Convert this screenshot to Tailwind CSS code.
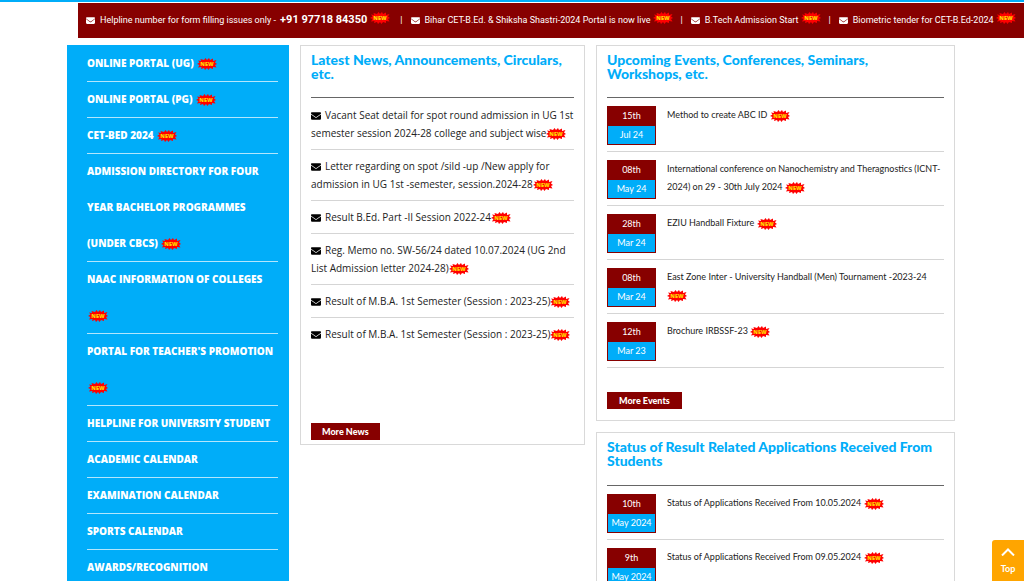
<!DOCTYPE html>
<html lang="en">
<head>
<meta charset="utf-8">
<meta name="viewport" content="width=device-width, initial-scale=1">
<title>University Portal</title>
<script src="https://cdn.jsdelivr.net/npm/@tailwindcss/browser@4"></script>
</head>
<body class="h-screen overflow-hidden bg-white font-['Lato','Open_Sans',sans-serif] text-[#222]">
<svg class="hidden" aria-hidden="true">
  <symbol id="new" viewBox="0 0 40 24">
    <path fill="#ff0000" d="M0 12 5 9 2 5 8 6 7 2 14 4 17 0 20 4 24 0 26 4 32 1 32 6 39 4 36 9 40 12 36 14 39 19 32 18 32 22 26 20 23 24 20 20 16 24 14 20 8 22 9 18 2 19 5 14Z"/>
    <text x="20" y="16" text-anchor="middle" font-family="Open Sans, sans-serif" font-weight="800" font-size="11" fill="#ffd800">NEW</text>
  </symbol>
  <symbol id="mail" viewBox="0 0 512 384">
    <path fill="currentColor" d="M48 0h416c27 0 48 21 48 48 0 15-7 29-19 38L275 249c-11 9-27 9-38 0L19 86C7 77 0 63 0 48 0 21 21 0 48 0ZM0 112l218 163c22 17 54 17 76 0l218-163v208c0 35-29 64-64 64H64c-35 0-64-29-64-64Z"/>
  </symbol>
</svg>

<header class="border-t-2 border-[#00adf9] pt-px">
  <div class="ml-[78px] flex h-[35px] items-center overflow-hidden bg-[#870000] pl-2 font-['Roboto','Open_Sans',sans-serif] text-[9px] whitespace-nowrap text-white">
    <a href="#" class="flex items-center"><svg class="mr-[5px] h-[7px] w-[9px]"><use href="#mail"/></svg>Helpline number for form filling issues only -&nbsp;<b class="ml-[2px] text-[11px]">+91 97718 84350</b><svg class="mb-[6px] ml-[3px] h-3 w-5" role="img" aria-label="New"><use href="#new"/></svg></a>
    <span class="mr-2 ml-[10px]">|</span>
    <a href="#" class="flex items-center"><svg class="mr-[5px] h-[7px] w-[9px]"><use href="#mail"/></svg>Bihar CET-B.Ed. &amp; Shiksha Shastri-2024 Portal is now live<svg class="mb-[6px] ml-[2px] h-3 w-5" role="img" aria-label="New"><use href="#new"/></svg></a>
    <span class="mx-2">|</span>
    <a href="#" class="flex items-center"><svg class="mr-[5px] h-[7px] w-[9px]"><use href="#mail"/></svg>B.Tech Admission Start<svg class="mb-[6px] ml-[2px] h-3 w-5" role="img" aria-label="New"><use href="#new"/></svg></a>
    <span class="mx-2">|</span>
    <a href="#" class="flex items-center"><svg class="mr-[5px] h-[7px] w-[9px]"><use href="#mail"/></svg>Biometric tender for CET-B.Ed-2024<svg class="mb-[6px] ml-[2px] h-3 w-5" role="img" aria-label="New"><use href="#new"/></svg></a>
  </div>
</header>

<main class="mt-[7px] grid grid-cols-[222fr_285fr_359fr] items-start gap-[11px] pr-[69px] pl-[67px]">
  <nav class="bg-[#00adf9] pr-[11px] pb-5 pl-5 font-['Open_Sans','Noto_Sans',sans-serif] text-[10px] leading-[36px] font-extrabold text-white uppercase" aria-label="Quick links">
    <ul>
      <li class="shadow-[0_1px_0_#b3e6fd]"><a href="#">Online Portal (UG) <svg class="ml-px inline h-3 w-5" role="img" aria-label="New"><use href="#new"/></svg></a></li>
      <li class="shadow-[0_1px_0_#b3e6fd]"><a href="#">Online Portal (PG) <svg class="ml-px inline h-3 w-5" role="img" aria-label="New"><use href="#new"/></svg></a></li>
      <li class="shadow-[0_1px_0_#b3e6fd]"><a href="#">CET-BED 2024 <svg class="ml-px inline h-3 w-5" role="img" aria-label="New"><use href="#new"/></svg></a></li>
      <li class="shadow-[0_1px_0_#b3e6fd]"><a href="#">Admission Directory for Four Year Bachelor Programmes<br>(Under CBCS) <svg class="ml-px inline h-3 w-5" role="img" aria-label="New"><use href="#new"/></svg></a></li>
      <li class="shadow-[0_1px_0_#b3e6fd]"><a href="#">NAAC Information of Colleges <svg class="ml-px inline h-3 w-5" role="img" aria-label="New"><use href="#new"/></svg></a></li>
      <li class="shadow-[0_1px_0_#b3e6fd]"><a href="#"><span class="whitespace-nowrap">Portal for Teacher's Promotion</span> <svg class="ml-px inline h-3 w-5" role="img" aria-label="New"><use href="#new"/></svg></a></li>
      <li class="shadow-[0_1px_0_#b3e6fd]"><a href="#" class="whitespace-nowrap">Helpline for University Student</a></li>
      <li class="shadow-[0_1px_0_#b3e6fd]"><a href="#">Academic Calendar</a></li>
      <li class="shadow-[0_1px_0_#b3e6fd]"><a href="#">Examination Calendar</a></li>
      <li class="shadow-[0_1px_0_#b3e6fd]"><a href="#">Sports Calendar</a></li>
      <li class="shadow-[0_1px_0_#b3e6fd]"><a href="#">Awards/Recognition</a></li>
    </ul>
  </nav>

  <section class="border border-[#d9d9d9] px-[10px] pt-[7px] pb-1">
    <h2 class="border-b border-[#666] pb-4 text-[14px] leading-[14px] font-black text-[#00adf9]">Latest News, Announcements, Circulars, etc.</h2>
    <ul class="pt-px font-['Open_Sans','Noto_Sans',sans-serif] text-[10px] leading-[18px]">
      <li class="border-b border-[#d5d5d5] py-[7px]"><a href="#"><svg class="mr-1 inline h-2 w-[10px] text-black"><use href="#mail"/></svg>Vacant Seat detail for spot round admission in UG 1st semester session 2024-28 college and subject wise<svg class="inline h-3 w-5" role="img" aria-label="New"><use href="#new"/></svg></a></li>
      <li class="border-b border-[#d5d5d5] py-[7px]"><a href="#"><svg class="mr-1 inline h-2 w-[10px] text-black"><use href="#mail"/></svg>Letter regarding on spot /sild -up /New apply for<br>admission in UG 1st -semester, session.2024-28<svg class="inline h-3 w-5" role="img" aria-label="New"><use href="#new"/></svg></a></li>
      <li class="border-b border-[#d5d5d5] py-[7px]"><a href="#"><svg class="mr-1 inline h-2 w-[10px] text-black"><use href="#mail"/></svg>Result B.Ed. Part -II Session 2022-24<svg class="inline h-3 w-5" role="img" aria-label="New"><use href="#new"/></svg></a></li>
      <li class="border-b border-[#d5d5d5] py-[7px]"><a href="#"><svg class="mr-1 inline h-2 w-[10px] text-black"><use href="#mail"/></svg>Reg. Memo no. SW-56/24 dated 10.07.2024 (UG 2nd<br>List Admission letter 2024-28)<svg class="inline h-3 w-5" role="img" aria-label="New"><use href="#new"/></svg></a></li>
      <li class="border-b border-[#d5d5d5] py-[7px]"><a href="#"><svg class="mr-1 inline h-2 w-[10px] text-black"><use href="#mail"/></svg>Result of M.B.A. 1st Semester (Session : 2023-25)<svg class="inline h-3 w-5" role="img" aria-label="New"><use href="#new"/></svg></a></li>
      <li class="py-[7px]"><a href="#"><svg class="mr-1 inline h-2 w-[10px] text-black"><use href="#mail"/></svg>Result of M.B.A. 1st Semester (Session : 2023-25)<svg class="inline h-3 w-5" role="img" aria-label="New"><use href="#new"/></svg></a></li>
    </ul>
    <button type="button" class="mt-[73px] block h-[17px] bg-[#870000] px-[11px] text-[9px] leading-[17px] font-black text-white">More News</button>
  </section>

  <div class="flex flex-col gap-[11px]">
    <section class="border border-[#d9d9d9] px-[10px] pt-[7px] pb-[11px]">
      <h2 class="border-b border-[#666] pb-4 text-[14px] leading-[14px] font-black text-[#00adf9]">Upcoming Events, Conferences, Seminars, Workshops, etc.</h2>
      <ul class="text-[9px] leading-[18px]">
        <li class="flex gap-[11px] border-b border-[#d5d5d5] pt-2 pb-[6px]"><time class="block h-[39px] w-[49px] shrink-0 border border-[#870000] bg-[#00adf9] text-center text-white"><span class="block h-[19px] bg-[#870000]">15th</span><span class="block">Jul 24</span></time><a href="#">Method to create ABC ID <svg class="inline h-3 w-5" role="img" aria-label="New"><use href="#new"/></svg></a></li>
        <li class="flex gap-[11px] border-b border-[#d5d5d5] pt-2 pb-[6px]"><time class="block h-[39px] w-[49px] shrink-0 border border-[#870000] bg-[#00adf9] text-center text-white"><span class="block h-[19px] bg-[#870000]">08th</span><span class="block">May 24</span></time><a href="#">International conference on Nanochemistry and Theragnostics (ICNT-2024) on 29 - 30th July 2024 <svg class="inline h-3 w-5" role="img" aria-label="New"><use href="#new"/></svg></a></li>
        <li class="flex gap-[11px] border-b border-[#d5d5d5] pt-2 pb-[6px]"><time class="block h-[39px] w-[49px] shrink-0 border border-[#870000] bg-[#00adf9] text-center text-white"><span class="block h-[19px] bg-[#870000]">28th</span><span class="block">Mar 24</span></time><a href="#">EZIU Handball Fixture <svg class="inline h-3 w-5" role="img" aria-label="New"><use href="#new"/></svg></a></li>
        <li class="flex gap-[11px] border-b border-[#d5d5d5] pt-2 pb-[6px]"><time class="block h-[39px] w-[49px] shrink-0 border border-[#870000] bg-[#00adf9] text-center text-white"><span class="block h-[19px] bg-[#870000]">08th</span><span class="block">Mar 24</span></time><a href="#">East Zone Inter - University Handball (Men) Tournament -2023-24<br><svg class="inline h-3 w-5" role="img" aria-label="New"><use href="#new"/></svg></a></li>
        <li class="flex gap-[11px] border-b border-[#d5d5d5] pt-2 pb-[6px]"><time class="block h-[39px] w-[49px] shrink-0 border border-[#870000] bg-[#00adf9] text-center text-white"><span class="block h-[19px] bg-[#870000]">12th</span><span class="block">Mar 23</span></time><a href="#">Brochure IRBSSF-23 <svg class="inline h-3 w-5" role="img" aria-label="New"><use href="#new"/></svg></a></li>
      </ul>
      <button type="button" class="mt-6 block h-[17px] bg-[#870000] px-3 text-[9px] leading-[17px] font-black text-white">More Events</button>
    </section>

    <section class="border border-[#d9d9d9] px-[10px] pt-[7px] pb-3">
      <h2 class="border-b border-[#666] pb-[17px] text-[14px] leading-[14px] font-black text-[#00adf9]">Status of Result Related Applications Received From Students</h2>
      <ul class="text-[9px] leading-[18px]">
        <li class="flex gap-[11px] border-b border-[#d5d5d5] pt-2 pb-[6px]"><time class="block h-[39px] w-[49px] shrink-0 border border-[#870000] bg-[#00adf9] text-center text-white"><span class="block h-[19px] bg-[#870000]">10th</span><span class="block">May 2024</span></time><a href="#">Status of Applications Received From 10.05.2024 <svg class="inline h-3 w-5" role="img" aria-label="New"><use href="#new"/></svg></a></li>
        <li class="flex gap-[11px] border-b border-[#d5d5d5] pt-2 pb-[6px]"><time class="block h-[39px] w-[49px] shrink-0 border border-[#870000] bg-[#00adf9] text-center text-white"><span class="block h-[19px] bg-[#870000]">9th</span><span class="block">May 2024</span></time><a href="#">Status of Applications Received From 09.05.2024 <svg class="inline h-3 w-5" role="img" aria-label="New"><use href="#new"/></svg></a></li>
      </ul>
    </section>
  </div>
</main>

<a href="#" class="fixed right-0 bottom-0 flex h-[41px] w-8 flex-col items-center rounded-tl-[3px] bg-[#ffa500] pt-2 text-[9px] leading-[18px] font-bold text-white">
  <svg class="h-2 w-[14px] shrink-0" viewBox="0 0 14 8" fill="none" stroke="currentColor" stroke-width="2"><path d="M1 7.5 7 1.5 13 7.5"/></svg>
  <span class="pt-[4px]">Top</span>
</a>
</body>
</html>
